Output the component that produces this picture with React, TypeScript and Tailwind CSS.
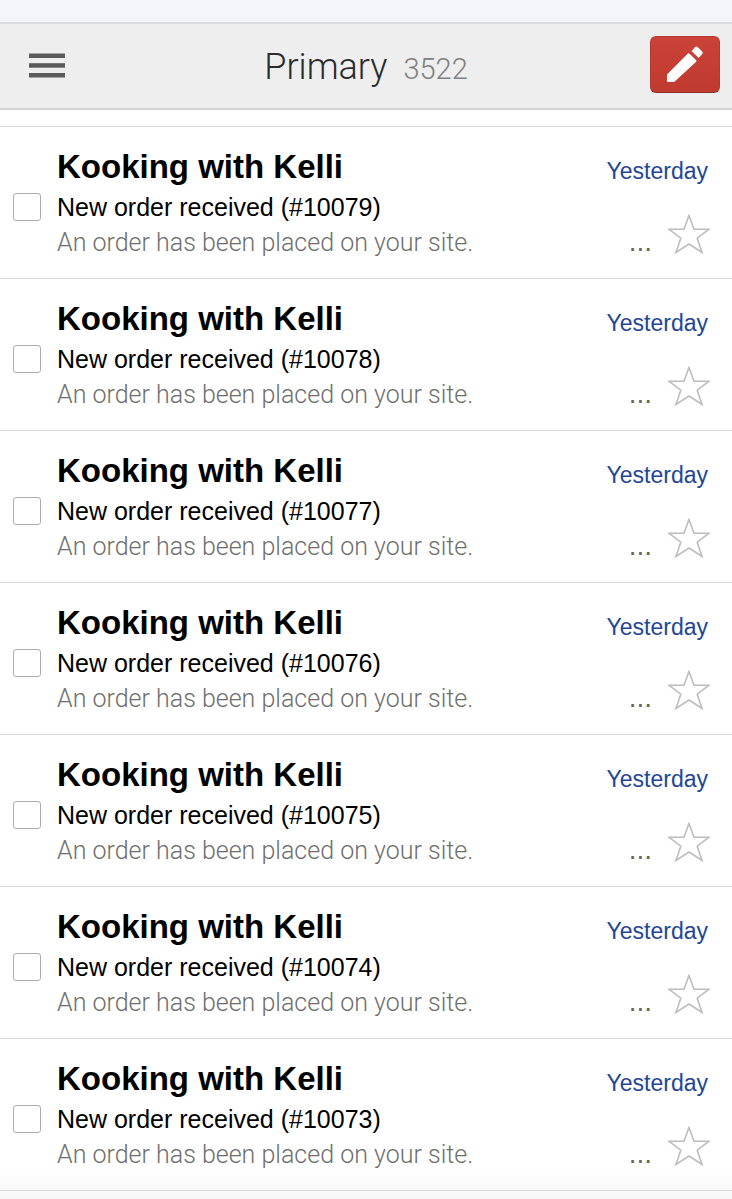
type Message = {
  id: number
  sender: string
  subject: string
  preview: string
  date: string
}

const messages: Message[] = [10079, 10078, 10077, 10076, 10075, 10074, 10073].map(id => ({
  id,
  sender: 'Kooking with Kelli',
  subject: `New order received (#${id})`,
  preview: 'An order has been placed on your site.',
  date: 'Yesterday',
}))

function MenuIcon() {
  return (
    <svg viewBox="0 0 36 25" className="h-[25px] w-9" fill="#5a5a5a" aria-hidden="true">
      <rect y="0.5" width="36" height="4.5" />
      <rect y="10.2" width="36" height="4.5" />
      <rect y="20" width="36" height="4.5" />
    </svg>
  )
}

function PencilIcon() {
  return (
    <svg viewBox="0 0 36 36" className="size-9" fill="#fff" aria-hidden="true">
      <path d="M0 28.4 L20.9 7.6 Q21.6 7 22.3 7.6 L29.2 14.3 Q29.8 15 29.2 15.7 L8 35.3 Q7.3 36 6.5 36 H0.8 Q0 36 0 35.2 Z" />
      <path d="M24.5 4.9 L28.2 1 Q29.4 0 30.6 1 L35.2 5.6 Q36.3 6.8 35.3 8 L31.7 12 Z" />
    </svg>
  )
}

function StarIcon() {
  return (
    <svg viewBox="0 0 42 40" className="h-10 w-[42px]" fill="none" stroke="#bdbdbd" strokeWidth="1.6" aria-hidden="true">
      <path d="M21 1.5 L26 15.2 H41 L29.2 24.2 L34 38.5 L21 30 L8 38.5 L12.8 24.2 L1 15.2 H16 Z" />
    </svg>
  )
}

function Header() {
  return (
    <header className="flex h-22 items-center border-t-2 border-b-2 border-t-[#dcdce0] border-b-[#d2d2d2] bg-[#eeeeee] px-3 pb-1">
      <div className="flex flex-1 pt-0.5">
        <button type="button" aria-label="Open menu" className="pl-[17px]">
          <MenuIcon />
        </button>
      </div>
      <h1 className="flex items-baseline gap-4 pt-1.5 font-[Roboto,sans-serif] text-[36px] font-light text-[#2b2b2b]">
        Primary <span className="text-[29px] text-[#808080]">3522</span>
      </h1>
      <div className="flex flex-1 justify-end">
        <button
          type="button"
          aria-label="Compose"
          className="flex h-[57px] w-[70px] items-center justify-center rounded-md border border-[#b23a30] border-b-[#8e2f28] bg-linear-to-b from-[#cb4237] to-[#c03a30]"
        >
          <PencilIcon />
        </button>
      </div>
    </header>
  )
}

function MessageRow({ message }: { message: Message }) {
  return (
    <li className="flex h-38 border-b border-[#dedede] pr-[22px] pl-[13px]">
      <label className="flex w-11 items-center pt-2">
        <input
          type="checkbox"
          aria-label={`Select ${message.subject}`}
          className="size-7 appearance-none rounded-[3px] border border-[#acacac] bg-white checked:bg-[#1f4698]"
        />
      </label>
      <div className="min-w-0 flex-1 pt-5">
        <h2 className="truncate text-[33px] leading-10 font-bold text-black">{message.sender}</h2>
        <p className="truncate text-[25px] leading-10 text-black">{message.subject}</p>
        <p className="truncate font-[Roboto,sans-serif] text-[25px] leading-8 font-light text-[#6e6e6e]">{message.preview}</p>
      </div>
      <div className="flex flex-col items-end justify-between pt-6 pb-6">
        <time className="pr-[2px] text-[23px] leading-10 text-[#1f4698]">{message.date}</time>
        <div className="flex items-end gap-4">
          <span className="text-[28px] leading-6 text-[#666666]">...</span>
          <button type="button" aria-label="Star message">
            <StarIcon />
          </button>
        </div>
      </div>
    </li>
  )
}

export default function App() {
  return (
    <div className="min-h-screen bg-white font-['Liberation_Sans',Arial,sans-serif]">
      <div className="h-[22px] bg-[#f3f5fa]" />
      <Header />
      <ul className="mt-4 border-t border-[#dedede]">
        {messages.map(message => (
          <MessageRow key={message.id} message={message} />
        ))}
      </ul>
      <div className="pointer-events-none fixed inset-x-0 bottom-0 h-8 bg-linear-to-b from-black/0 to-black/3" />
    </div>
  )
}
